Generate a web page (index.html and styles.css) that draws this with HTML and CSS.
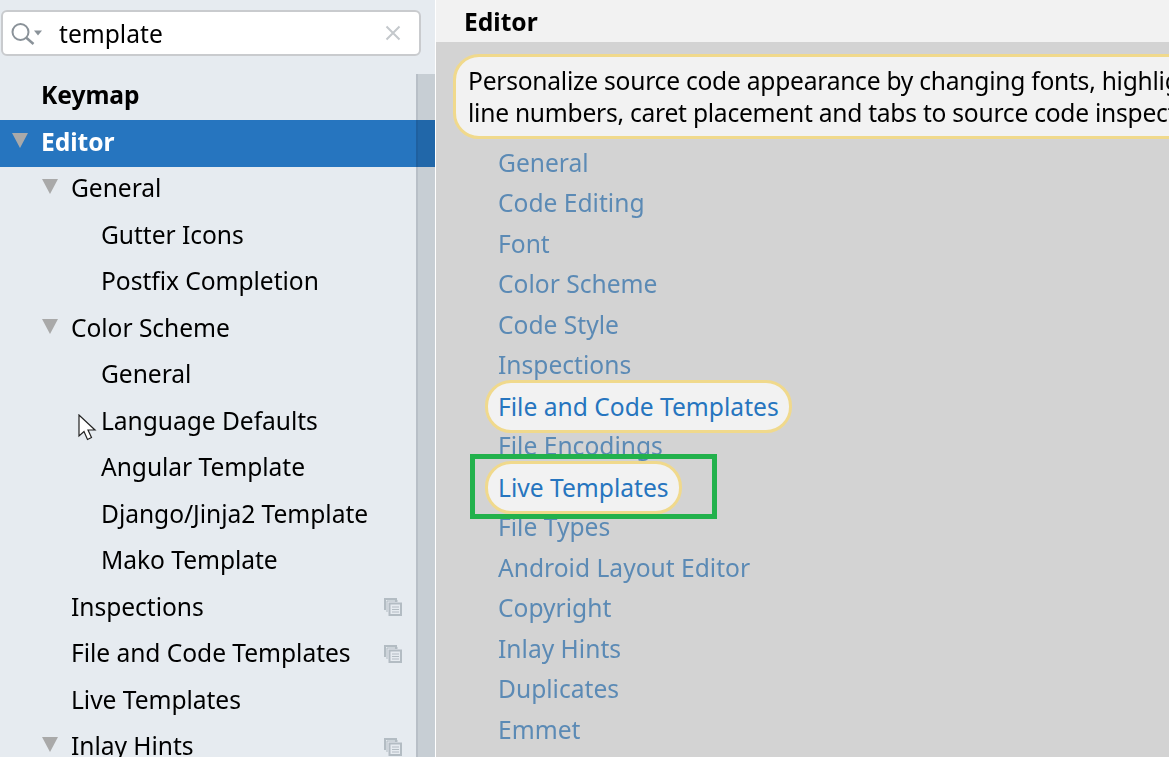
FILE: index.html
```html
<!DOCTYPE html>
<html lang="en">
<head>
  <meta charset="UTF-8" />
  <title>Settings</title>
  <link rel="stylesheet" href="styles.css">
</head>
<body>

  <aside class="sidebar">
    <div class="search">
      <svg class="search-icon" width="32" height="30" viewBox="0 0 32 30">
        <circle cx="9.500" cy="14" r="8" fill="none" stroke="#8a9299" stroke-width="2"/>
        <path d="M15 19.500l7.500 6.500" fill="none" stroke="#8a9299" stroke-width="2.500"/>
        <path d="M23 12.500h8l-4 5z" fill="#8a9299"/>
      </svg>
      <span class="search-text">template</span>
      <svg class="search-clear" width="16" height="16" viewBox="0 0 16 16">
        <path d="M1.500 1.500l13 13M14.500 1.500l-13 13" fill="none" stroke="#c4c8cc" stroke-width="2"/>
      </svg>
    </div>

    <div class="tree-wrap">
      <ul class="tree">
        <li class="row level-0 bold">Keymap</li>
        <li class="row level-0 bold selected"><span class="arrow"></span>Editor</li>
        <li class="row level-1"><span class="arrow"></span>General</li>
        <li class="row level-2">Gutter Icons</li>
        <li class="row level-2">Postfix Completion</li>
        <li class="row level-1"><span class="arrow"></span>Color Scheme</li>
        <li class="row level-2">General</li>
        <li class="row level-2">Language Defaults</li>
        <li class="row level-2">Angular Template</li>
        <li class="row level-2">Django/Jinja2 Template</li>
        <li class="row level-2">Mako Template</li>
        <li class="row level-1">Inspections
          <svg class="copy-icon" width="18" height="18" viewBox="0 0 18 18"><use href="#copy"/></svg>
        </li>
        <li class="row level-1">File and Code Templates
          <svg class="copy-icon" width="18" height="18" viewBox="0 0 18 18"><use href="#copy"/></svg>
        </li>
        <li class="row level-1">Live Templates</li>
        <li class="row level-1"><span class="arrow"></span>Inlay Hints
          <svg class="copy-icon" width="18" height="18" viewBox="0 0 18 18"><use href="#copy"/></svg>
        </li>
      </ul>
      <div class="scrollbar"></div>
    </div>
  </aside>

  <main class="content">
    <h2 class="title">Editor</h2>
    <div class="panel">
      <p class="bubble">Personalize source code appearance by changing fonts, highlighting, and colors<br>line numbers, caret placement and tabs to source code inspections and templates</p>
      <ul class="links">
        <li>General</li>
        <li>Code Editing</li>
        <li>Font</li>
        <li>Color Scheme</li>
        <li>Code Style</li>
        <li>Inspections</li>
        <li><span class="pill">File and Code Templates</span></li>
        <li>File Encodings</li>
        <li><span class="pill">Live Templates</span></li>
        <li>File Types</li>
        <li>Android Layout Editor</li>
        <li>Copyright</li>
        <li>Inlay Hints</li>
        <li>Duplicates</li>
        <li>Emmet</li>
      </ul>
    </div>
  </main>

  <!-- annotation and mouse pointer sit over the screenshot -->
  <div class="green-box"></div>
  <svg class="cursor" width="20" height="28" viewBox="0 0 20 28">
    <path d="M1 1v21l5-4.500 3.500 8 4-2-3.500-7.500h7z" fill="#fff" stroke="#222" stroke-width="1.200"/>
  </svg>

  <svg width="0" height="0" class="defs">
    <symbol id="copy" viewBox="0 0 18 18">
      <path d="M1 12V1h11v3" fill="none" stroke="#b3bcc3" stroke-width="2"/>
      <path d="M3 14V3h11" fill="none" stroke="#b3bcc3" stroke-width="1"/>
      <rect x="5.500" y="5.500" width="11.500" height="11.500" fill="none" stroke="#b3bcc3" stroke-width="2"/>
      <path d="M8 9h7M8 11.500h7M8 14h7" stroke="#b3bcc3" stroke-width="1.200"/>
    </symbol>
  </svg>

</body>
</html>
```

FILE: styles.css
```css
* { margin: 0; padding: 0; box-sizing: border-box; }

html, body {
  height: 100%;
  overflow: hidden;
}

body {
  display: flex;
  position: relative;
  width: 1169px;
  height: 757px;
  font-family: "Noto Sans", sans-serif;
  font-size: 24.6px;
  color: #000;
  background: #fff;
}

ul { list-style: none; }

.defs { position: absolute; }

/* left tree */
.sidebar {
  width: 435px;
  flex: none;
  background: #e6ebf0;
  display: flex;
  flex-direction: column;
}

.search {
  display: flex;
  align-items: center;
  width: 420px;
  height: 46px;
  margin: 10px 0 17.500px 1px;
  padding: 0 18px 0 8px;
  background: #fff;
  border: 2px solid #c9cbce;
  border-radius: 6px;
}

.search-icon { flex: none; }

.search-text {
  flex: 1;
  margin-left: 16px;
}

.search-clear { flex: none; }

.tree-wrap {
  flex: 1;
  position: relative;
  overflow: hidden;
}

.row {
  display: flex;
  align-items: center;
  position: relative;
  height: 46.5px;
  padding-bottom: 4px;
  letter-spacing: -0.05px;
  white-space: nowrap;
}

.level-0 { padding-left: 41px; }
.level-1 { padding-left: 71px; }
.level-2 { padding-left: 101px; }

.bold { font-weight: bold; }

.selected {
  background: #2675bf;
  color: #fff;
}

.arrow {
  position: absolute;
  margin-left: -29px;
  margin-top: -2px;
  width: 0;
  height: 0;
  border-left: 8.500px solid transparent;
  border-right: 8.500px solid transparent;
  border-top: 15px solid #a9a9a9;
}

.copy-icon {
  position: absolute;
  left: 384px;
  top: 13px;
}

.scrollbar {
  position: absolute;
  top: 0;
  right: 0;
  bottom: 0;
  width: 19px;
  background: #dde0e2;
  border-left: 2px solid #ccd0d4;
  mix-blend-mode: multiply;
}

/* right panel */
.content {
  flex: 1;
  margin-left: 1px;
  min-width: 0;
  display: flex;
  flex-direction: column;
  background: #f2f2f2;
}

.title {
  height: 42px;
  line-height: 44px;
  padding-left: 28px;
  font-size: 24.6px;
  font-weight: bold;
}

.panel {
  flex: 1;
  background: #d3d3d3;
  padding: 12px 0 0 17px;
}

.bubble {
  width: 900px;
  height: 85px;
  padding: 8px 0 0 12px;
  line-height: 32px;
  letter-spacing: -0.25px;
  white-space: nowrap;
  overflow: hidden;
  background: #f2f2f2;
  border: 3px solid #f0d98c;
  border-radius: 26px;
}

.links {
  margin-top: 3.500px;
  padding-left: 45px;
  color: #5b8ab5;
}

.links li {
  height: 40.500px;
  line-height: 40.500px;
  white-space: nowrap;
}

.pill {
  display: inline-block;
  position: relative;
  z-index: 1;
  height: 53px;
  line-height: 47px;
  margin: -6px -13px;
  padding: 0 10px;
  color: #2675bf;
  background: #f2f2f2;
  border: 3px solid #f0d98c;
  border-radius: 26px;
  vertical-align: top;
}

.green-box {
  position: absolute;
  left: 470px;
  top: 454px;
  width: 247px;
  height: 65px;
  border: 5px solid #22b14c;
  z-index: 2;
}

.cursor {
  position: absolute;
  left: 78px;
  top: 414px;
  z-index: 3;
}
```
